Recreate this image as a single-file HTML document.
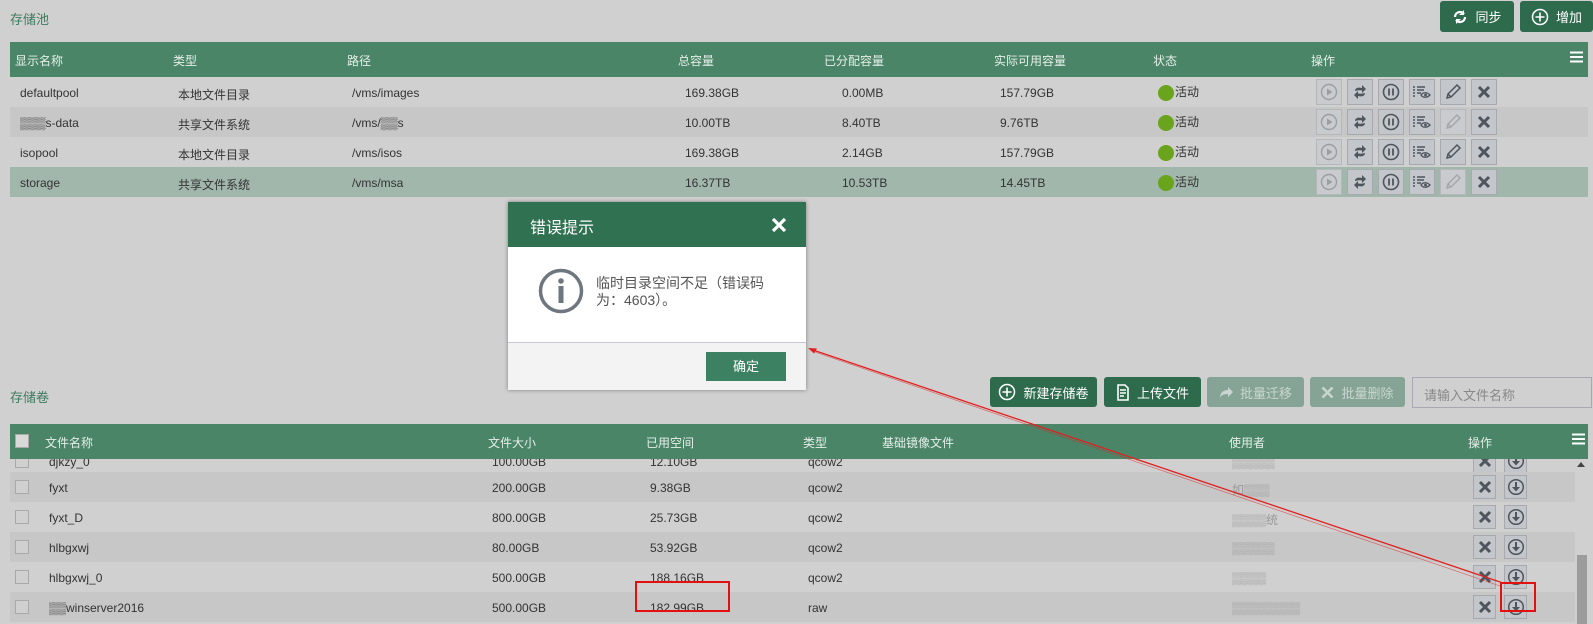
<!DOCTYPE html>
<html><head><meta charset="utf-8"><style>
*{margin:0;padding:0;box-sizing:border-box}
body{width:1593px;height:624px;overflow:hidden;background:#d0d0d0;font-family:"Liberation Sans","Noto Sans CJK SC",sans-serif;font-size:12px;color:#333;position:relative}
.a{position:absolute;white-space:nowrap}
.hdr{position:absolute;left:10px;right:5px;background:#4a8567;color:#e6efe9;font-size:12px;z-index:5}
.row{position:absolute;left:10px;right:5px;height:30px}
.l{background:#d0d0d0}.d{background:#c7c7c7}.s{background:#a1b7ab}
.btn{position:absolute;background:#2e6b4d;color:#fff;border-radius:3px;font-size:13px;display:flex;align-items:center;justify-content:center;gap:7px}
.btn.dis{background:#86a496;color:#c9d6cf}
.ib{position:absolute;width:26px;height:26px;border:1px solid #a6a9ad;background:#c3c6ca;display:flex;align-items:center;justify-content:center}
.cb{position:absolute;width:14px;height:14px;border:1px solid #a9a9a9;background:#d0d0d0}
.dot{display:inline-block;width:16px;height:16px;border-radius:50%;background:#6aa31c;vertical-align:middle;margin-right:1px}
</style></head><body>

<div class="a" style="left:10px;top:9px;font-size:13px;color:#3d7b5e">存储池</div>
<div class="btn" style="left:1440px;top:1px;width:74px;height:31px"><svg width="16" height="16" viewBox="0 0 16 16"><path d="M13 8a5 5 0 0 1-9 3M3 8a5 5 0 0 1 9-3" fill="none" stroke="#fff" stroke-width="2.2"/><path d="M12 1v5h-5z M4 15v-5h5z" fill="#fff"/></svg>同步</div>
<div class="btn" style="left:1520px;top:1px;width:73px;height:31px"><svg width="18" height="18" viewBox="0 0 18 18"><circle cx="9" cy="9" r="7.5" fill="none" stroke="#fff" stroke-width="1.5"/><path d="M9 4.5v9M4.5 9h9" stroke="#fff" stroke-width="1.6"/></svg>增加</div>

<div class="hdr" style="top:42px;height:35px">
<span class="a" style="left:5px;top:10px">显示名称</span><span class="a" style="left:163px;top:10px">类型</span><span class="a" style="left:337px;top:10px">路径</span><span class="a" style="left:668px;top:10px">总容量</span><span class="a" style="left:814px;top:10px">已分配容量</span><span class="a" style="left:984px;top:10px">实际可用容量</span><span class="a" style="left:1143px;top:10px">状态</span><span class="a" style="left:1301px;top:10px">操作</span>
<svg class="a" style="right:5px;top:9px" width="13" height="12"><path d="M0 1.5h13M0 6h13M0 10.5h13" stroke="#fff" stroke-width="2"/></svg>
</div>

<div class="row l" style="top:77px"></div>
<div class="row d" style="top:107px"></div>
<div class="row l" style="top:137px"></div>
<div class="row s" style="top:167px"></div>

<div id="top"></div>

<div class="a" style="left:10px;top:387px;font-size:13px;color:#3d7b5e">存储卷</div>
<div class="btn" style="left:990px;top:377px;width:107px;height:30px"><svg width="18" height="18" viewBox="0 0 18 18"><circle cx="9" cy="9" r="7.5" fill="none" stroke="#fff" stroke-width="1.5"/><path d="M9 4.5v9M4.5 9h9" stroke="#fff" stroke-width="1.6"/></svg>新建存储卷</div>
<div class="btn" style="left:1104px;top:377px;width:97px;height:30px"><svg width="14" height="17" viewBox="0 0 14 17"><path d="M2 1h7l3 3v12H2z" fill="none" stroke="#fff" stroke-width="1.6"/><path d="M4 6h6M4 9h6M4 12h4" stroke="#fff" stroke-width="1.4"/></svg>上传文件</div>
<div class="btn dis" style="left:1207px;top:377px;width:97px;height:30px"><svg width="14" height="14" viewBox="0 0 14 14"><path d="M1 13c0-6 4-8 8-8V2l5 5-5 5V9C5 9 2 10 1 13z" fill="#c9d6cf"/></svg>批量迁移</div>
<div class="btn dis" style="left:1310px;top:377px;width:95px;height:30px"><svg width="13" height="13"><path d="M1.5 1.5l10 10M11.5 1.5l-10 10" stroke="#c9d6cf" stroke-width="2.6"/></svg>批量删除</div>
<div class="a" style="left:1412px;top:377px;width:180px;height:31px;border:1px solid #a8a8b5;background:#d0d0d0;color:#888;font-size:13px;padding:7px 0 0 11px">请输入文件名称</div>

<div class="hdr" style="top:424px;height:35px">
<div class="cb" style="left:5px;top:10px;background:#d9d9d9"></div>
<span class="a" style="left:35px;top:10px">文件名称</span><span class="a" style="left:478px;top:10px">文件大小</span><span class="a" style="left:636px;top:10px">已用空间</span><span class="a" style="left:793px;top:10px">类型</span><span class="a" style="left:872px;top:10px">基础镜像文件</span><span class="a" style="left:1219px;top:10px">使用者</span><span class="a" style="left:1458px;top:10px">操作</span>
<svg class="a" style="right:3px;top:9px" width="13" height="12"><path d="M0 1.5h13M0 6h13M0 10.5h13" stroke="#fff" stroke-width="2"/></svg>
</div>
<div id="bot"></div>

<div class="a" style="left:1575px;top:459px;width:13px;height:165px;background:#d0d0d0"></div>
<div class="a" style="left:1577px;top:462px;width:0;height:0;border:4px solid transparent;border-bottom:5px solid #444;border-top:0"></div>
<div class="a" style="left:1577px;top:555px;width:10px;height:69px;background:#9c9c9c"></div>

<!-- dialog -->
<div class="a" style="left:508px;top:202px;width:298px;height:188px;background:#fff;box-shadow:0 0 4px rgba(0,0,0,.4);z-index:10">
<div style="height:45px;background:#2f7150;color:#fff;font-size:16px;padding:12px 0 0 22px;position:relative">错误提示
<svg style="position:absolute;right:19px;top:15px" width="16" height="16"><path d="M2 2l12 12M14 2L2 14" stroke="#fff" stroke-width="3.2"/></svg></div>
<svg style="position:absolute;left:30px;top:66px" width="46" height="46"><circle cx="23" cy="23" r="20.5" fill="none" stroke="#6e7680" stroke-width="3.5"/><circle cx="23" cy="13" r="2.8" fill="#6e7680"/><rect x="20.5" y="18" width="5" height="17" fill="#6e7680"/></svg>
<div style="position:absolute;left:88px;top:73px;font-size:14px;color:#555;line-height:17px">临时目录空间不足（错误码<br>为：4603）。</div>
<div style="position:absolute;left:0;right:0;top:140px;bottom:0;background:#f3f3f3;border-top:1px solid #c8c8d8"></div>
<div style="position:absolute;left:198px;top:150px;width:80px;height:29px;background:#3c8262;color:#fff;font-size:13px;text-align:center;line-height:29px">确定</div>
</div>

<!-- red annotations -->
<div class="a" style="left:635px;top:581px;width:95px;height:31px;border:2px solid #e21010;z-index:11"></div>
<div class="a" style="left:1500px;top:582px;width:36px;height:30px;border:2px solid #e21010;z-index:11"></div>
<svg class="a" style="left:0;top:0;z-index:11" width="1593" height="624"><path d="M1503 583L810 349" stroke="#e02020" stroke-width="1.3"/><path d="M1500 586L812 351" stroke="#e02020" stroke-width="0.6" opacity=".7"/><path d="M808 348l9 0.5-3 5z" fill="#e02020"/></svg>

<script>
var t=[["defaultpool","本地文件目录","/vms/images","169.38GB","0.00MB","157.79GB",1],
["▒▒▒s-data","共享文件系统","/vms/▒▒s","10.00TB","8.40TB","9.76TB",0],
["isopool","本地文件目录","/vms/isos","169.38GB","2.14GB","157.79GB",1],
["storage","共享文件系统","/vms/msa","16.37TB","10.53TB","14.45TB",0]];
var ic=['<svg width="18" height="18"><circle cx="9" cy="9" r="7.5" fill="none" stroke="#9a9ea3" stroke-width="1.4"/><path d="M7 5.5v7l5.5-3.5z" fill="#9a9ea3"/></svg>',
'<svg width="16" height="16" viewBox="0 0 16 16"><path d="M3 7c0-3 3-4 7-3V1l4 4-4 4V6.5C7 6 5 6.5 3 7zM13 9c0 3-3 4-7 3v3l-4-4 4-4v2.5c3 .5 5 0 7-.5z" fill="#4e555c"/></svg>',
'<svg width="18" height="18"><circle cx="9" cy="9" r="7.5" fill="none" stroke="#4e555c" stroke-width="1.6"/><path d="M7 5.5v7M11 5.5v7" stroke="#4e555c" stroke-width="1.8"/></svg>',
'<svg width="18" height="14"><path d="M0 2h2M4 2h8M0 5h2M4 5h7M0 8h2M4 8h4M0 11h2" stroke="#4e555c" stroke-width="1.5"/><path d="M8 10c2-3 6-3 9 0-3 3-7 3-9 0z" fill="none" stroke="#4e555c" stroke-width="1.3"/><circle cx="12.5" cy="10" r="1.4" fill="#4e555c"/></svg>',
'<svg width="18" height="18"><path d="M3 15l1-4 9-9 3 3-9 9z M4 11l3 3" fill="none" stroke="C" stroke-width="1.5"/></svg>',
'<svg width="14" height="14"><path d="M2 2l10 10M12 2L2 12" stroke="#4e555c" stroke-width="3"/></svg>'];
var h='';
t.forEach(function(r,i){var y=77+i*30;
h+='<span class="a" style="left:20px;top:'+(y+9)+'px">'+r[0]+'</span><span class="a" style="left:178px;top:'+(y+9)+'px">'+r[1]+'</span><span class="a" style="left:352px;top:'+(y+9)+'px">'+r[2]+'</span><span class="a" style="left:685px;top:'+(y+9)+'px">'+r[3]+'</span><span class="a" style="left:842px;top:'+(y+9)+'px">'+r[4]+'</span><span class="a" style="left:1000px;top:'+(y+9)+'px">'+r[5]+'</span><span class="a" style="left:1158px;top:'+(y+6)+'px"><span class="dot"></span>活动</span>';
for(var k=0;k<6;k++){var s=ic[k];var bg='';if(k==0)bg='background:#c9cbce;border-color:#b5b7ba';if(k==4){s=s.replace('C',r[6]?'#4e555c':'#a5a8ab');if(!r[6])bg='background:#c9cbce;border-color:#b5b7ba';}
h+='<div class="ib" style="left:'+(1316+k*31)+'px;top:'+(y+2)+'px;'+bg+'">'+s+'</div>';}
});
document.getElementById('top').outerHTML=h;
var b=[["djkzy_0","100.00GB","12.10GB","qcow2","▒▒▒▒▒","l",446],["fyxt","200.00GB","9.38GB","qcow2","如▒▒▒","d",472],["fyxt_D","800.00GB","25.73GB","qcow2","▒▒▒▒统","l",502],["hlbgxwj","80.00GB","53.92GB","qcow2","▒▒▒▒▒","d",532],["hlbgxwj_0","500.00GB","188.16GB","qcow2","▒▒▒▒","l",562],["▒▒winserver2016","500.00GB","182.99GB","raw","▒▒▒▒▒▒▒▒","d",592]];
var g='';
b.forEach(function(r){var y=r[6];
g+='<div class="row '+r[5]+'" style="top:'+y+'px;right:18px"></div><div class="cb" style="left:15px;top:'+(y+8)+'px"></div><span class="a" style="left:49px;top:'+(y+9)+'px">'+r[0]+'</span><span class="a" style="left:492px;top:'+(y+9)+'px">'+r[1]+'</span><span class="a" style="left:650px;top:'+(y+9)+'px">'+r[2]+'</span><span class="a" style="left:808px;top:'+(y+9)+'px">'+r[3]+'</span><span class="a" style="left:1232px;top:'+(y+9)+'px;color:#999">'+r[4]+'</span>';
g+='<div class="ib" style="left:1473px;top:'+(y+3)+'px;width:23px;height:24px">'+ic[5]+'</div><div class="ib" style="left:1504px;top:'+(y+3)+'px;width:23px;height:24px"><svg width="18" height="18"><circle cx="9" cy="9" r="7.3" fill="none" stroke="#4e555c" stroke-width="1.5"/><path d="M9 4v6" stroke="#4e555c" stroke-width="2"/><path d="M5 9h8l-4 4.5z" fill="#4e555c"/></svg></div>';});
document.getElementById('bot').outerHTML=g;
</script>
</body></html>
